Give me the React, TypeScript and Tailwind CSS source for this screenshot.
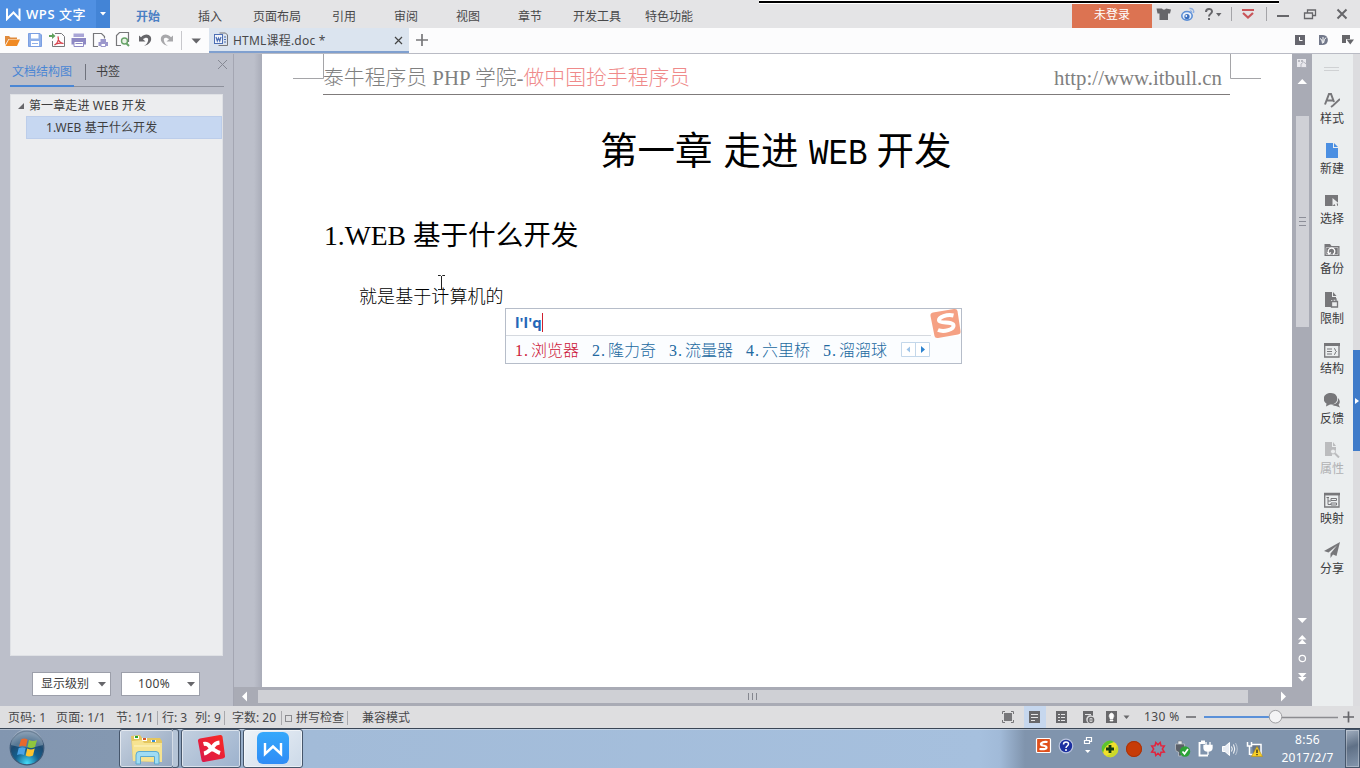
import React from 'react';

type P = { children?: React.ReactNode; w?: number; h?: number; c?: string; vb?: string };

const Svg = ({ children, w = 16, h = 16, c = '', vb }: P) => (
  <svg width={w} height={h} viewBox={vb || `0 0 ${w} ${h}`} className={'block shrink-0 ' + c} fill="none">
    {children}
  </svg>
);

const G = '#77777a';

const menu = ['插入', '页面布局', '引用', '审阅', '视图', '章节', '开发工具', '特色功能'];

function TitleBar() {
  return (
    <div className="relative flex h-[28px] shrink-0 bg-[#e4e4e6]">
      <div className="flex w-[96px] items-center bg-[#5090e2] pl-[6px]">
        <Svg w={15} h={14}>
          <path d="M1 1.5V12L7.5 5.5L13.5 12V1.5" stroke="#fff" strokeWidth="2" />
        </Svg>
        <span className="ml-[5px] mt-px whitespace-nowrap font-['Open_Sans','Noto_Sans_CJK_SC',sans-serif] text-[13px] font-semibold tracking-[0.550px] text-white">
          WPS <span className="font-medium">文字</span>
        </span>
      </div>
      <div className="flex w-[14px] items-center justify-center bg-[#4384d6]">
        <Svg w={6} h={4}><path d="M0 0H6L3 3.5Z" fill="#fff" /></Svg>
      </div>
      <div className="flex pl-[7px] pt-[4px] leading-[25px]">
        <div className="w-[62px] text-center font-bold text-[#4a7fc4]">开始</div>
        {menu.map((m) => (
          <div key={m} className={(m.length > 2 ? 'w-[72px]' : 'w-[62px]') + ' text-center text-[#48484a]'}>{m}</div>
        ))}
      </div>
      <div className="ml-auto flex">
        <div className="mt-[4px] h-[24px] w-[80px] bg-[#dc7352] text-center leading-[21px] text-white">未登录</div>
        <Svg w={208} h={28}>
          <path d="M10 8.5H4.500L5.500 13.500H7.500V20H16V13.500H18L19 9.500L14 8.5C13.500 10 10.500 10 10 8.5Z" fill="#66666a" />
          <ellipse cx="35" cy="15.800" rx="5.200" ry="4.300" fill="#e8f0fb" stroke="#5c8fd6" strokeWidth="1.600" />
          <circle cx="35" cy="16.500" r="2.600" fill="#3b70c0" />
          <circle cx="34.300" cy="16" r="0.900" fill="#fff" />
          <path d="M37.500 8.500C40.500 8 42.500 10.500 41.500 13M38 11C39.500 10.800 40 12 39.500 13" stroke="#8fb0e2" strokeWidth="1.400" />
          <path d="M54 12C54 8 60 8 60 11.500C60 14 57 13.500 57 16.500" stroke="#66666a" strokeWidth="2" />
          <rect x="56" y="18" width="2" height="2" fill="#66666a" />
          <path d="M64 13H69.500L66.750 16.500Z" fill="#66666a" />
          <path d="M79.500 7V21M114.500 7V21" stroke="#a4a4a8" />
          <path d="M90 10H102" stroke="#c9555a" strokeWidth="2" />
          <path d="M91 13L96 17.500L101 13" stroke="#c9555a" strokeWidth="2.200" />
          <path d="M125 16H137" stroke="#66666a" strokeWidth="2" />
          <path d="M152.500 13H160.500V18.500H152.500ZM155.500 13V10H163.500V15.500H160.500" stroke="#66666a" strokeWidth="1.300" />
          <path d="M185.500 9.500L194.500 18.500M194.500 9.500L185.500 18.500" stroke="#66666a" strokeWidth="2" />
        </Svg>
      </div>
      <div className="absolute left-[759px] top-0 h-[4px] w-[520px] border-b border-t border-white bg-black" />
    </div>
  );
}

function ToolBar() {
  return (
    <div className="flex h-[26px] shrink-0 border-b border-[#b9bbc4] bg-[#fcfcfd]">
      <Svg w={209} h={25} vb="0 28 209 25">
        <path d="M5 45V36H9L10.500 37.500H17V39H8.500Z" fill="#e08a3c" />
        <path d="M9 39.500H20L17 46H5.500Z" fill="#f08a24" />
        <path d="M28.500 33.500H40L41.500 35V46.500H28.500Z" fill="#8fb0ea" stroke="#7b9fe2" />
        <rect x="31" y="34" width="7.500" height="4.500" fill="#fff" /><rect x="31" y="41" width="8" height="5" fill="#fff" />
        <path d="M32 43.500H38" stroke="#8fb0ea" />
        <path d="M55 33.500H61.500L64.500 36.500V46.500H52.500V41" stroke="#77777a" />
        <path d="M49 35H52V33L55.500 36L52 39V37H49Z" fill="#5fa05c" />
        <path d="M54.500 45C58 43.500 59 39 58 36.500C58 41 60 43 63.500 43.500C60 42.500 56 43.500 54.500 45Z" stroke="#d8414c" strokeWidth="1.200" />
        <path d="M73.500 33.500H84V37H73.500Z" fill="#a9a5d6" /><path d="M71.500 38H86V44.500H71.500Z" fill="#8e89c4" />
        <path d="M74 41.500H83.500V46.500H74Z" fill="#fff" stroke="#8e89c4" /><path d="M75.500 43.500H82.500" stroke="#8e89c4" />
        <path d="M98 46.500H93.500V33.500H101.500L104.500 36.500V38.500" stroke="#77777a" strokeWidth="1.200" />
        <path d="M100.500 39H106V42H108V46H98.500V42H100.500Z" fill="#9b97cc" /><path d="M101 43.500H105.500V46.500H101Z" fill="#fff" stroke="#9b97cc" />
        <path d="M128.500 42V32.500H119.500L116.500 35.500V45.500H121" stroke="#77777a" strokeWidth="1.200" />
        <circle cx="124.500" cy="41" r="3" stroke="#67a368" strokeWidth="1.400" fill="#e8f3e6" /><path d="M126.500 43.500L129 46" stroke="#67a368" strokeWidth="2" />
        <path d="M139 35.500V41.500H145.500L143 39.200C146 36.500 149 37.500 148 41C147.500 43 146 45 144 46C150 44.500 152.500 40 150.500 36.500C148.500 33.500 144 33.800 141 37.300Z" fill="#66666a" />
        <path d="M173 35.500V41.500H166.500L169 39.200C166 36.500 163 37.500 164 41C164.500 43 166 45 168 46C162 44.500 159.500 40 161.500 36.500C163.500 33.500 168 33.800 171 37.300Z" fill="#a8a8ab" />
        <path d="M181.500 31V50" stroke="#c8c8cc" />
        <path d="M191.500 38.500H201L196.250 43.500Z" fill="#66666a" />
      </Svg>
      <div className="flex w-[200px] items-center border-b-2 border-[#80a0cf] bg-[#dbe4ef] pl-[5px] text-[#48484a]">
        <Svg w={15} h={15}>
          <path d="M5.500 1H11.500L13.500 3V13.500H4.500" stroke="#77777a" />
          <rect x="0.500" y="2.500" width="8" height="9" fill="#f2f5fb" stroke="#4d6fb4" />
          <path d="M2 5L3.300 9L4.500 6L5.700 9L7 5M10 5H12M10 7.500H12M10 10H12" stroke="#4d6fb4" strokeWidth="1.200" />
        </Svg>
        <span className="ml-[4px] mt-[2px] text-[12px] tracking-[0.200px]">HTML课程.doc *</span>
        <Svg w={9} h={9} c="ml-auto mr-[6px] mt-px"><path d="M1 1L8 8M8 1L1 8" stroke="#444" strokeWidth="1.200" /></Svg>
      </div>
      <Svg w={26} h={25}><path d="M7 12H19M13 6V18" stroke="#77777a" strokeWidth="1.700" /></Svg>
      <Svg w={68} h={25} c="ml-auto">
        <rect x="3" y="7" width="10" height="10" fill="#66666e" /><path d="M7.500 9V12.500H10.500" stroke="#fff" />
        <path d="M27 7H31C37.500 7 37.500 17 31 17H27Z" fill="#72788a" /><path d="M28 10.500Q30.500 11 30.500 15.500M31 9V14M34 9.500Q32 11 31.500 15" stroke="#fff" />
        <path d="M50 7H58V11H54V15H50Z" fill="#66666a" /><path d="M54.500 11.500H62L58.250 16.500Z" fill="#66666a" />
      </Svg>
    </div>
  );
}

function LeftPanel() {
  return (
    <div className="flex w-[234px] shrink-0 flex-col border-r border-[#a4a6b2] bg-[#bcbfca] pl-[10px] text-[#3e3e40]">
      <div className="flex h-[33px] w-[214px] border-b border-[#8e919c]">
        <div className="h-[33px] w-[64px] border-b-2 border-[#4a86d4] pl-[2px] pt-[9px] leading-[18px] text-[#4a86d4]">文档结构图</div>
        <div className="ml-[11px] mt-[10px] h-[16px] w-px bg-[#6f727c]" />
        <div className="ml-[10px] pt-[9px] leading-[18px]">书签</div>
        <Svg w={11} h={11} c="-mr-[4px] ml-auto mt-[5px]"><path d="M1 1L10 10M10 1L1 10" stroke="#858893" /></Svg>
      </div>
      <div className="mt-[7px] h-[562px] w-[213px] border border-[#dfe1e5] bg-[#ecedef]">
        <div className="flex h-[21px] items-center pl-[6px]">
          <Svg w={8} h={8}><path d="M7 1V7H1Z" fill="#66666a" /></Svg>
          <span className="ml-[4px] whitespace-nowrap tracking-[0.100px]">第一章走进 WEB 开发</span>
        </div>
        <div className="ml-[15px] flex h-[23px] items-center border border-[#bccdea] bg-[#c6d7f1] pl-[19px] tracking-[0.100px]">1.WEB 基于什么开发</div>
      </div>
      <div className="mt-[16px] flex pl-[22px]">
        <div className="flex h-[24px] w-[79px] items-center border border-[#9c9faa] bg-white pl-[8px]">
          显示级别<Svg w={8} h={5} c="ml-auto mr-[4px]"><path d="M0 0H8L4 4.500Z" fill="#66666a" /></Svg>
        </div>
        <div className="ml-[10px] flex h-[24px] w-[79px] items-center border border-[#9c9faa] bg-white pl-[16px]">
          <span className="tracking-[0.400px]">100%</span><Svg w={8} h={5} c="ml-auto mr-[4px]"><path d="M0 0H8L4 4.500Z" fill="#66666a" /></Svg>
        </div>
      </div>
    </div>
  );
}

const cands = ['2.隆力奇', '3.流量器', '4.六里桥', '5.溜溜球'];
const num = "inline-block w-[16px] font-['Liberation_Serif',serif] tracking-[1px] not-italic";

function Ime() {
  return (
    <div className="absolute left-[243px] top-[254px] h-[56px] w-[457px] border border-[#b6bdc9] bg-white">
      <div className="flex h-[27px] w-[425px] items-center border-b border-[#d5d9df] pl-[9px]">
        <span className="font-['Open_Sans',sans-serif] text-[15px] font-bold text-[#2467b8]">l'l'q</span>
        <span className="h-[19px] w-px bg-[#d02030]" />
      </div>
      <div className="flex h-[27px] items-center whitespace-nowrap bg-[#fbfdff] pl-[9px] font-['Noto_Sans_CJK_SC',sans-serif] text-[16px] font-light text-[#22699f]">
        <span className="mt-px w-[77px] text-[#cc1738]"><i className={num}>1.</i>浏览器</span>
        {cands.map((c) => (
          <span key={c} className="mt-px w-[77px]"><i className={num}>{c.slice(0, 2)}</i>{c.slice(2)}</span>
        ))}
        <Svg w={29} h={15} c="ml-[1px]">
          <path d="M0.500 0.500H28.500V14.500H0.500ZM14.500 0.500V14.500" stroke="#c3d7ea" fill="#fff" />
          <path d="M9 4.500V10.500L5.500 7.500Z" fill="#9cc3e8" /><path d="M20 4V11L24 7.500Z" fill="#2d83cf" />
        </Svg>
      </div>
      <Svg w={32} h={32} c="absolute right-0 top-[-1px]">
        <path d="M4 4.500L25 1Q28 0.500 28.500 3L31.500 23Q32 26 29 26.500L9 30Q6 30.500 5.500 28L1.500 8Q1 5 4 4.500Z" fill="#f5a184" />
        <path d="M24.500 7.500C18 6 9.500 9 10 12.500C10.500 16 24 13 24.500 17.500C25 21.500 15 24.500 9 22" stroke="#fff" strokeWidth="4" />
      </Svg>
    </div>
  );
}

function Page() {
  return (
    <div className="relative w-[1030px] bg-white">
      <Svg w={1030} h={42} c="absolute left-0 top-0">
        <path d="M61.500 0V24.500H31M968.500 0V24.500H999" stroke="#a5a5a8" />
      </Svg>
      <div className="ml-[61px] flex h-[41px] w-[907px] justify-between whitespace-nowrap border-b border-[#7f7b7b] pr-[8px] pt-[9px] font-['Liberation_Serif','Noto_Sans_CJK_SC',serif] text-[20.800px] font-light leading-[30px] text-[#808080]">
        <span className="tracking-[0.020px]">泰牛程序员 PHP 学院-<span className="text-[#ef8a8a]">做中国抢手程序员</span></span>
        <span className="tracking-[0.030px]">http://www.itbull.cn</span>
      </div>
      <div className="mt-[27px] h-[52px] whitespace-nowrap pl-[338px] font-['Noto_Sans_CJK_SC',sans-serif] text-[37.500px] leading-[52px] text-black">
        第一章<span className="ml-[11px]">走进</span>
        <span className="ml-[10px] inline-flex w-[58px]"><span className="origin-left scale-x-[0.88] font-['Liberation_Mono',monospace] text-[37px]">WEB</span></span>
        <span className="ml-[10px]">开发</span>
      </div>
      <div className="mt-[42px] whitespace-nowrap pl-[62px] font-['Liberation_Serif','Noto_Sans_CJK_SC',serif] text-[27.600px] leading-[40px] text-black">1.WEB 基于什么开发</div>
      <div className="mt-[26px] pl-[97px] font-['Noto_Sans_CJK_SC',sans-serif] text-[18px] font-light leading-[26px] tracking-[0.080px] text-black">就是基于计算机的</div>
      <Svg w={9} h={17} c="absolute left-[175px] top-[220px]"><path d="M1 1.500H3.500L4.500 2.500L5.500 1.500H8M4.500 2V15M1 15.500H8" stroke="#222" /></Svg>
      <Ime />
    </div>
  );
}

const side: [string, React.ReactNode][] = [
  ['样式', <><path d="M1 12.500L5 2H7L10 10M3 8.500H9" stroke={G} strokeWidth="2" /><path d="M16 7L9 13.500L7 15" stroke={G} strokeWidth="1.800" /></>],
  ['新建', <><path d="M2 1H9V6H14V16H2Z" fill="#4b8fe2" /><path d="M10 1L14 5H10Z" fill="#4b8fe2" /></>],
  ['选择', <><path d="M1 3H14V14H1Z" fill={G} /><path d="M8.500 6V14L10.500 12L12 15L13.500 14L12.500 11.500H15Z" fill="#ebedee" /></>],
  ['备份', <><path d="M0.500 14V2H6L7.500 4H15.500V14Z" fill={G} /><path d="M2 5.500H14V12.500H2Z" stroke="#c8c8ca" strokeWidth="0.800" /><path d="M5 11.500A3.300 3.300 0 1 1 9 12.300M3.500 10L5 12L7 10.500" stroke="#fff" strokeWidth="1.300" /></>],
  ['限制', <><path d="M1 0H8V5H12V8H7V15H1Z" fill={G} /><path d="M9 0L12.500 4H9Z" fill={G} /><path d="M7.500 9.500H13.500V15H7.500ZM9 9.500V7H12V9.500" stroke={G} strokeWidth="1.300" fill="#ebedee" /></>],
  ['结构', <><path d="M0.700 2.500H15V15H0.700Z" stroke={G} strokeWidth="1.300" /><path d="M0 2.500H16" stroke={G} strokeWidth="3" /><path d="M3 7H8M3 9.500H8M3 12H8M10 6.500C12 6.500 10.500 9 12.500 9.500C10.500 10 12 12.500 10 12.500" stroke={G} /></>],
  ['反馈', <><path d="M12 14C9 14 8 12.500 8 12.500C13 12.500 14.500 9 14 6C17 9 15.500 12 14.500 12.500L16 15.500Z" fill={G} /><path d="M7 1C-2 1-1.500 10 2.500 11.500L2 14.500L6 12.500C15.500 13 15.500 1 7 1Z" fill={G} /></>],
  ['属性', <><path d="M1 0H8V5H12V8A4 4 0 0 0 8 13V14H1Z" fill="#bbbcbe" /><path d="M9 0L12 4H9Z" fill="#bbbcbe" /><circle cx="9" cy="9.500" r="2.500" stroke="#bbbcbe" fill="#ebedee" /><path d="M11 11.500L15 15.500" stroke="#bbbcbe" strokeWidth="2" /></>],
  ['映射', <><path d="M0.700 2.500H15V15H0.700Z" stroke={G} strokeWidth="1.300" /><path d="M0 2H16" stroke={G} strokeWidth="2.500" /><path d="M2.500 5.500H5M4 5.500V12.500H7M4 9H7M7 6.500H12.500V8.500H7ZM7 11H12.500V13H7Z" stroke={G} /></>],
  ['分享', <path d="M16 0L0 9L4.500 10.500L13 3.500L6.500 11.500V16L9 12.500L12.500 14Z" fill={G} />],
];

function SideBar() {
  return (
    <>
      <div className="flex w-[41px] shrink-0 flex-col items-center bg-[#ebeeef] pt-[13px]">
        <div className="-ml-[3px] h-[4px] w-[15px] border-y border-[#cfd1d3]" />
        <div className="-ml-[1px] mt-[21px] flex flex-col">
          {side.map(([t, i]) => (
            <div key={t} className="flex h-[50px] flex-col items-center">
              <Svg>{i}</Svg>
              <span className={'mt-[2px] leading-[18px] ' + (t === '属性' ? 'text-[#b0b1b3]' : 'text-[#3c3c3e]')}>{t}</span>
            </div>
          ))}
        </div>
      </div>
      <div className="w-[7px] shrink-0 bg-[#dcdcdf] pt-[296px]">
        <div className="flex h-[101px] items-center bg-[#3f7bc9] pl-[2px]"><Svg w={4} h={6}><path d="M0 0V6L4 3Z" fill="#fff" /></Svg></div>
      </div>
    </>
  );
}

function Center() {
  return (
    <div className="flex w-[1078px] shrink-0 flex-col">
      <div className="flex h-[633px]">
        <div className="w-[28px] bg-[linear-gradient(90deg,#bcbfca_0,#bcbfca_20px,#a9acb8_28px)]" />
        <Page />
        <div className="flex w-[20px] flex-col items-center bg-[#a9abb5]">
          <Svg w={20} h={62} c="h-[62px]">
            <path d="M5 5H14V9H10V13H5Z" fill="#e9e9ee" /><path d="M7 6V8M10 6V8" stroke="#888a94" /><path d="M9 13.500V10L11.500 8L14.500 10V13.500H9Z" fill="#e9e9ee" stroke="#a9abb5" strokeWidth="0.800" />
            <path d="M5.500 30H15L10.250 25Z" fill="#fff" />
          </Svg>
          <div className="flex h-[211px] w-[13px] flex-col items-center justify-center gap-[3px] bg-[#cfd0d6]">
            <i className="h-px w-[7px] bg-[#8c8e98]" /><i className="h-px w-[7px] bg-[#8c8e98]" /><i className="h-px w-[7px] bg-[#8c8e98]" />
          </div>
          <Svg w={20} h={76} c="mt-auto">
            <path d="M5.500 7H15L10.250 12ZM6 28.500H14.500L10.250 24ZM6 33H14.500L10.250 28.500ZM6 62H14.500L10.250 66.500ZM6 66H14.500L10.250 70.500Z" fill="#fff" />
            <circle cx="10.300" cy="47.500" r="3.200" stroke="#fff" strokeWidth="1.200" />
          </Svg>
        </div>
      </div>
      <div className="flex h-[19px] bg-[#a9abb5]">
        <Svg w={24} h={19}><path d="M13 4.500V14.500L8 9.500Z" fill="#fff" /></Svg>
        <div className="mt-[3px] flex h-[13px] w-[990px] items-center justify-center gap-[3px] bg-[#cfd0d5] pr-[2px]">
          <i className="h-[7px] w-px bg-[#85878f]" /><i className="h-[7px] w-px bg-[#85878f]" /><i className="h-[7px] w-px bg-[#85878f]" />
        </div>
        <Svg w={44} h={19}><path d="M33 4.500V14.500L38 9.500Z" fill="#fff" /></Svg>
      </div>
    </div>
  );
}

const bar = 'mb-px h-[14px] w-px bg-[#a8a8ac]';

function StatusBar() {
  return (
    <div className="flex h-[22px] shrink-0 items-center whitespace-nowrap bg-[#dedee0] text-[#48484a]">
      <div className="flex items-center pl-[8px] pt-[2px]">
        <span className="w-[48px] tracking-[0.200px]">页码: 1</span>
        <span className="w-[60px] tracking-[0.200px]">页面: 1/1</span>
        <span className="w-[41px] tracking-[0.200px]">节: 1/1</span>
        <i className={bar} />
        <span className="ml-[4px] w-[33px]">行: 3</span>
        <span className="w-[29px] tracking-[0.200px]">列: 9</span>
        <i className={bar} />
        <span className="ml-[7px] w-[49px]">字数: 20</span>
        <i className={bar} />
        <i className="ml-[3px] mr-[4px] h-[7px] w-[7px] border border-[#8a8a8e]" />
        <span className="w-[51px]">拼写检查</span>
        <i className={bar} />
        <span className="ml-[14px]">兼容模式</span>
      </div>
      <Svg w={140} h={22} c="ml-auto" vb="995 706 140 22">
        <rect x="1024" y="706" width="22" height="22" fill="#c6d7ee" />
        <path d="M1004 713H1012V721H1004Z" fill={G} /><path d="M1002.500 714V711.500H1005M1011 711.500H1013.500V714M1013.500 720V722.500H1011M1005 722.500H1002.500V720" stroke={G} />
        <path d="M1029 711H1040V723H1029ZM1056 711H1067V723H1056ZM1106 711H1117V723H1106ZM1083 711H1093V716A4 4 0 0 0 1088 723H1083Z" fill="#68686b" />
        <path d="M1031 714.500H1038M1031 717.500H1038M1031 720.500H1035M1058 714.500H1060M1061 714.500H1065M1058 717.500H1060M1061 717.500H1065M1058 720.500H1060M1061 720.500H1065M1085 714.500H1091" stroke="#e4e4e6" />
        <circle cx="1091" cy="720" r="2.600" stroke="#68686b" strokeWidth="1.400" /><path d="M1088 720H1094" stroke="#68686b" />
        <path d="M1111.500 713A3 3 0 0 1 1113 718V719H1110V718A3 3 0 0 1 1111.500 713ZM1110 720H1113V721H1110Z" fill="#fff" stroke="#fff" strokeWidth="0.600" />
        <path d="M1123.500 715.500H1129.500L1126.500 719Z" fill="#68686b" />
      </Svg>
      <span className="ml-[9px] w-[41px] text-[12px] tracking-[0.400px]">130 %</span>
      <Svg w={175} h={22}>
        <path d="M1 11H11M158 11H169M163.500 5.500V16.500" stroke="#66666a" strokeWidth="1.700" />
        <path d="M19 11H90" stroke="#5a90d8" strokeWidth="2" /><path d="M90 11.500H153" stroke="#8c8c90" strokeWidth="1.300" />
        <circle cx="90.500" cy="10.700" r="6.300" fill="#f4f4f5" stroke="#a0a0a3" />
      </Svg>
    </div>
  );
}

function Orb() {
  return (
    <Svg w={38} h={38} c="ml-[8px]">
      <defs><radialGradient id="orb" cx="0.5" cy="0.95" r="0.9"><stop offset="0" stopColor="#45dcf8" /><stop offset="0.4" stopColor="#14608f" /><stop offset="0.7" stopColor="#1d4a70" /><stop offset="1" stopColor="#5e7b98" /></radialGradient></defs>
      <circle cx="19" cy="19" r="16.800" fill="url(#orb)" stroke="#3c5876" strokeWidth="1.200" />
      <path d="M3 16A16 16 0 0 1 35 16Q19 21 3 16Z" fill="#fff" opacity="0.250" />
      <path d="M13 10.500Q16 8.500 19.500 10.500L18 17.500Q14.500 16 11 17.500Z" fill="#e9682c" />
      <path d="M21 11Q25 13 29 11L27 18Q23 20 19.500 18Z" fill="#8fc63e" />
      <path d="M10.700 19Q14.500 17.500 17.700 19L16 26Q12.500 24.500 9 26Z" fill="#4aa3e6" />
      <path d="M19.200 19.500Q23 21.500 26.700 19.500L25 26.500Q21 28.500 17.700 26.500Z" fill="#fdc42e" />
    </Svg>
  );
}

const btn = 'flex h-[39px] items-center justify-center rounded-[3px] border border-[#46566b] shadow-[inset_0_0_0_1px_rgba(255,255,255,0.55)] ';

function TaskBar() {
  return (
    <div className="flex h-[40px] shrink-0 border-t border-[#3a4656] bg-[linear-gradient(90deg,#8296b0_0,#8498b1_115px,#a2bbd8_310px,#a6c0de_980px,#a1bad8_1000px,#8094ad_1025px,#8094ad_1360px)] shadow-[inset_0_1px_0_rgba(255,255,255,0.35)]">
      <Orb />
      <div className="ml-[73px] flex">
        <div className={btn + 'w-[55px] bg-[linear-gradient(135deg,#c7d2e0,#93a6bf)]'}>
          <Svg w={34} h={32}>
            <path d="M1 3L10 2L12 5H30L32 8V29L3 28Z" fill="#e4c65f" />
            <path d="M4 3H9V6H4ZM12 5H17V8H12ZM21 7H26V9H21Z" fill="#fff" /><path d="M5 3H8V5H5Z" fill="#29a329" /><path d="M13 5H16V7H13Z" fill="#d4572e" /><path d="M22 7H25V9H22Z" fill="#3a8fd0" />
            <path d="M2 8L12 7L14 10H32V29L3 28Z" fill="#f6e391" /><path d="M4 13H30" stroke="#fff6c4" />
            <path d="M6 31V22Q6 18.500 9 18.500H26Q29 18.500 29 22V31H24.500V23.500H10.500V31Z" fill="#9fdcf4" stroke="#5ba9cf" />
          </Svg>
        </div>
        <div className="-ml-px h-[39px] w-[6px] rounded-r-[3px] border border-l-0 border-[#46566b] bg-[#b5c4d6]" />
        <div className={btn + 'ml-[2px] w-[60px] bg-[linear-gradient(135deg,#c3d0e0,#9db2cd)]'}>
          <Svg w={28} h={28} c="-mt-[2px]">
            <defs><linearGradient id="xm" x1="0" y1="1" x2="1" y2="0"><stop stopColor="#d8174f" /><stop offset="1" stopColor="#fb2a20" /></linearGradient></defs>
            <path d="M3 4.500L23 1Q25 0.500 25.500 2.500L28 22Q28.300 24 26 24.500L7 28Q5 28.300 4.500 26L1 7Q0.700 5 3 4.500Z" fill="url(#xm)" />
            <path d="M6.500 10C12 8.500 13 14 14.500 14.500C16 15 20 18 23 19M22.500 8.500C17 9 16 13 14.500 14.500C12 17 10 19 7 19.500" stroke="#fff" strokeWidth="4" />
          </Svg>
        </div>
        <div className={btn + 'ml-[2px] w-[60px] bg-[linear-gradient(135deg,#eef3f8,#ccd9e8)]'}>
          <Svg w={32} h={32} c="-mt-[2px]">
            <defs><linearGradient id="wps" x1="0" y1="0" x2="0" y2="1"><stop stopColor="#35a8fb" /><stop offset="1" stopColor="#2f8cf6" /></linearGradient></defs>
            <rect width="32" height="32" rx="6" fill="url(#wps)" />
            <path d="M8 11V22L16 14.500L24 22V11" stroke="#fff" strokeWidth="2.400" />
          </Svg>
        </div>
      </div>
      <Svg w={240} h={39} c="ml-auto" vb="1030 729 240 39">
        <rect x="1036.500" y="738.500" width="14" height="14" rx="1" fill="#e0501c" stroke="#fff" strokeWidth="1.200" />
        <path d="M1047.500 742C1041 741 1039 745 1043 745.500C1048 746 1048.500 750 1039.500 749" stroke="#fff" strokeWidth="2.200" />
        <circle cx="1066" cy="746" r="6.800" fill="#1b2fa0" stroke="#b9c4dd" strokeWidth="1.200" />
        <path d="M1063.500 744.500C1063.500 741 1068.500 741.500 1068.500 744C1068.500 746 1066 746 1066 748M1066 749V751" stroke="#fff" strokeWidth="1.500" />
        <path d="M1084.500 740.500H1089.500V743.500H1084.500ZM1086.500 740.500V737.500H1091.500V741.500H1089.500" stroke="#fff" strokeWidth="1.200" /><path d="M1085 750H1090.500L1087.750 753Z" fill="#fff" />
        <circle cx="1110" cy="749" r="8" fill="#f1df2c" /><path d="M1114 742A8 8 0 0 0 1103 753Q1104 745 1114 742Z" fill="#5cc42f" /><path d="M1106 756A8 8 0 0 0 1117 745Q1115 753 1106 756Z" fill="#c9d92b" /><path d="M1106 749H1114M1110 745V753" stroke="#143c12" strokeWidth="2.800" />
        <circle cx="1134" cy="749" r="8" fill="#c73c07" /><circle cx="1134" cy="749" r="7.500" stroke="#a83208" />
        <path d="M1158 744.800L1160.200 742.500L1161 745.800L1164.300 746L1162.300 749L1164.300 752L1161 752.300L1160.200 755.500L1158 753.300L1155.800 755.500L1155 752.300L1151.700 752L1153.700 749L1151.700 746L1155 745.800L1155.800 742.500Z" stroke="#e3233c" strokeWidth="1.500" />
        <path d="M1178 741H1182V745H1178Z" fill="#e8ebef" stroke="#70767e" strokeWidth="0.600" /><path d="M1175.500 744H1184.500V749Q1184.500 752 1181.500 752V756H1178.500V752Q1175.500 752 1175.500 749Z" fill="#5b6068" stroke="#c0c5cd" strokeWidth="0.700" /><circle cx="1185" cy="751.500" r="5.200" fill="#2ca337" /><path d="M1182.500 751.500L1184.500 753.800L1188 749" stroke="#fff" strokeWidth="1.700" />
        <path d="M1205 743H1199.500V755.500H1208M1201 741.500H1205" stroke="#fff" strokeWidth="1.800" /><path d="M1204 745.500H1212V748Q1212 751 1208 751Q1204 751 1204 748ZM1206 742V745M1210 742V745M1208 751V755" fill="#fff" stroke="#fff" strokeWidth="1.300" />
        <path d="M1222.500 746.500H1225L1229.500 742.500V755.500L1225 751.500H1222.500Z" fill="#e9edf3" stroke="#fff" /><path d="M1231.500 746.500Q1233 749 1231.500 751.500M1233.500 744.500Q1236 749 1233.500 753.500" stroke="#fff" /><path d="M1235.500 743Q1239 749 1235.500 755" stroke="#c8d0dc" strokeWidth="0.800" />
        <path d="M1252 744.500H1261V754.500H1253M1250 754.500H1254" stroke="#fff" strokeWidth="1.500" fill="#66758a" /><path d="M1247.500 742V746H1251.500V742M1249.500 746V755" stroke="#fff" strokeWidth="1.500" /><path d="M1257 746.500L1262.500 756.500H1251.500Z" fill="#f8cf26" stroke="#b98e13" strokeWidth="0.600" /><path d="M1257 749.500V753M1257 754V755.300" stroke="#222" strokeWidth="1.300" />
      </Svg>
      <div className="w-[75px] pt-[2px] text-center text-[12px] leading-[18px] tracking-[0.250px] text-white"><div>8:56</div><div>2017/2/7</div></div>
      <div className="w-[15px] border border-[#46566b] bg-[linear-gradient(160deg,#a3b0c1,#5f7086_45%,#8496ad)] shadow-[inset_0_0_0_1px_rgba(255,255,255,0.3)]" />
    </div>
  );
}

export default function App() {
  return (
    <div className="flex h-[768px] w-[1360px] flex-col overflow-hidden font-['Noto_Sans','Noto_Sans_CJK_SC',sans-serif] text-[12px]">
      <TitleBar />
      <ToolBar />
      <div className="flex h-[652px] shrink-0">
        <LeftPanel />
        <Center />
        <SideBar />
      </div>
      <StatusBar />
      <TaskBar />
    </div>
  );
}
